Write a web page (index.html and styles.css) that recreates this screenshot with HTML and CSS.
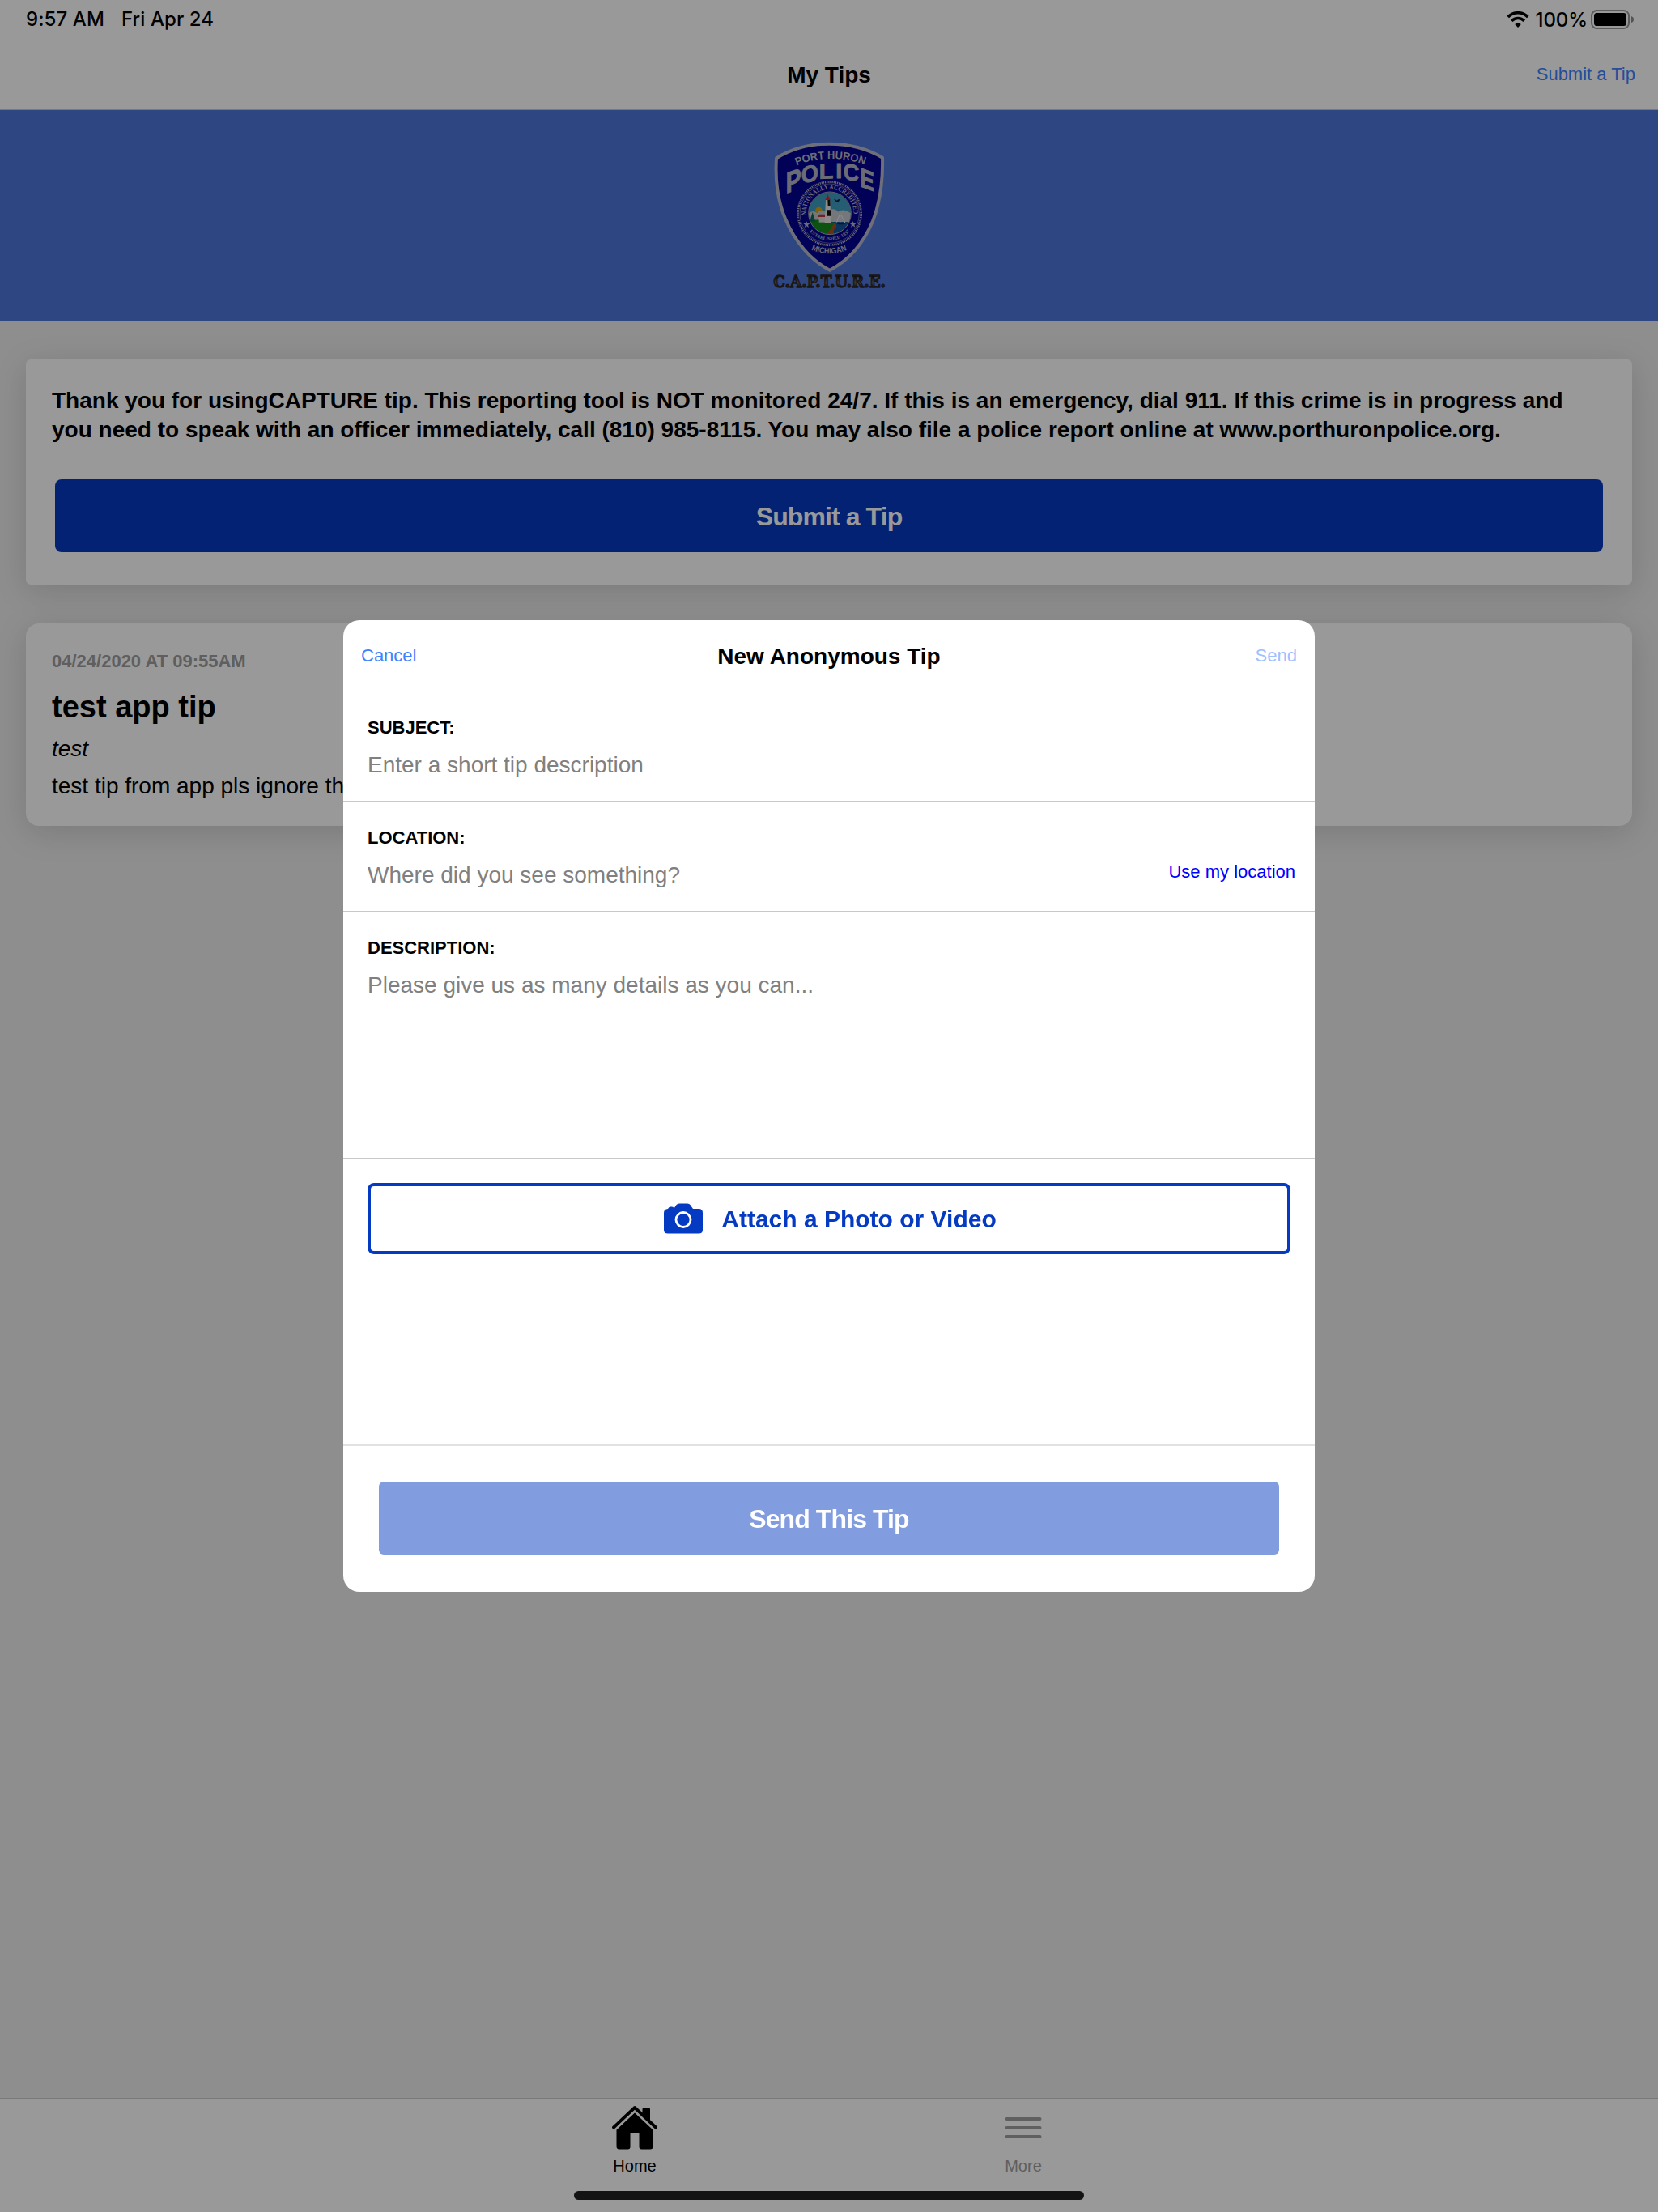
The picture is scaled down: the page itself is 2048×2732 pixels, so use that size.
FILE: index.html
```html
<!DOCTYPE html>
<html lang="en">
<head>
  <meta charset="UTF-8">
  <meta name="viewport" content="width=device-width, initial-scale=1.0">
  <title>My Tips</title>
  <link rel="stylesheet" href="styles.css">
</head>
<body>
  <div class="app">
    <div class="status-bar">
      <div class="status-left">
        <span class="time">9:57 AM</span>
        <span class="date">Fri Apr 24</span>
      </div>
      <div class="status-right">
        <svg class="wifi" width="28" height="20" viewBox="0 0 28 20">
          <path d="M1.7 7 A17 17 0 0 1 26.3 7" fill="none" stroke="#000" stroke-width="3.6"/>
          <path d="M6.2 11.8 A10.8 10.8 0 0 1 21.8 11.8" fill="none" stroke="#000" stroke-width="3.6"/>
          <path d="M14 20 L10.2 16 A5.4 5.4 0 0 1 17.8 16 Z" fill="#000"/>
        </svg>
        <span class="percent">100%</span>
        <svg class="battery" width="54" height="24" viewBox="0 0 54 24">
          <rect x="1" y="1" width="46" height="22" rx="6.5" fill="none" stroke="#000" stroke-opacity="0.4" stroke-width="2"/>
          <rect x="4" y="4" width="40" height="16" rx="3.5" fill="#000"/>
          <path d="M50 8 Q53 9 53 12 Q53 15 50 16 Z" fill="#000" fill-opacity="0.45"/>
        </svg>
      </div>
    </div>

    <div class="nav-bar">
      <span></span>
      <h1 class="nav-title">My Tips</h1>
      <a class="nav-link">Submit a Tip</a>
    </div>

    <div class="banner">
      <svg class="badge" width="210" height="230" viewBox="-3 3 630 690">
        <defs>
          <path id="arcPort" d="M192 163 Q316 113 448 162"/>
          <path id="ringTop" d="M228 352 A88 88 0 1 1 402 352"/>
          <path id="ringBottom" d="M214 341 A100 100 0 0 0 414 341"/>
          <path id="arcMichigan" d="M246 476 Q314 504 384 474"/>
          <clipPath id="scene"><circle cx="315" cy="340" r="78"/></clipPath>
          <linearGradient id="metal" x1="0" y1="0" x2="0" y2="1">
            <stop offset="0.2" stop-color="#111"/>
            <stop offset="0.55" stop-color="#6b5f5f"/>
            <stop offset="0.8" stop-color="#111"/>
          </linearGradient>
        </defs>
        <!-- shield -->
        <path d="M313 83 C235 83 175 100 117 136 C113 200 118 285 150 360 C185 445 245 515 315 551 C385 515 440 450 474 370 C505 290 512 210 510 134 C450 98 390 83 313 83 Z" fill="#020293" stroke="#b9b9cb" stroke-width="12" stroke-linejoin="round"/>
        <text class="port"><textPath href="#arcPort" textLength="258" lengthAdjust="spacingAndGlyphs">PORT HURON</textPath></text>
        <!-- every POLICE letter is taller towards the edges -->
        <g class="police">
          <text transform="translate(152 267) skewY(-20) scale(0.92 1.18)">P</text>
          <text transform="translate(209 228) skewY(-8) scale(0.88 0.94)">O</text>
          <text transform="translate(275 212) skewY(-2) scale(0.94 0.86)">L</text>
          <text transform="translate(337 211) scale(0.94 0.86)">I</text>
          <text transform="translate(365 214) skewY(8) scale(0.88 0.92)">C</text>
          <text transform="translate(427 240) skewY(20) scale(0.86 1.08)">E</text>
        </g>
        <!-- seal -->
        <circle cx="314" cy="341" r="117" fill="none" stroke="#a6a6bd" stroke-width="8" stroke-dasharray="4 2.5"/>
        <circle cx="314" cy="341" r="110" fill="none" stroke="#9494b5" stroke-width="2"/>
        <text class="ring"><textPath href="#ringTop" startOffset="4" textLength="290" lengthAdjust="spacingAndGlyphs">NATIONALLY ACCREDITED</textPath></text>
        <text class="ring ring-small"><textPath href="#ringBottom" startOffset="73" textLength="168" lengthAdjust="spacingAndGlyphs">ESTABLISHED 1857</textPath></text>
        <path class="star" d="M229 370 l3 8 h9 l-7 6 3 9 -8 -5 -8 5 3 -9 -7 -6 h9 Z"/>
        <path class="star" d="M401 369 l3 8 h9 l-7 6 3 9 -8 -5 -8 5 3 -9 -7 -6 h9 Z"/>
        <g clip-path="url(#scene)">
          <rect x="230" y="255" width="170" height="170" fill="#3f9dc0"/>
          <circle cx="274" cy="330" r="13" fill="#d2a51c"/>
          <path d="M230 350 Q248 322 268 340 Q285 322 300 335 Q330 315 345 335 Q365 318 400 345 V380 H230 Z" fill="#c3c7cc"/>
          <path d="M320 372 H400 V425 H310 Z" fill="#1557a0"/>
          <path d="M230 368 Q280 358 335 376 Q330 400 300 425 H230 Z" fill="#158a1d"/>
          <path d="M300 425 Q318 400 332 374 Q348 388 330 402 Q328 412 332 425 Z" fill="#a4561e"/>
          <path d="M240 372 L251 336 L262 372 Z" fill="#0b6b52"/>
          <rect x="275" y="352" width="22" height="22" fill="#ddd"/>
          <path d="M270 354 L276 344 H296 L298 354 Z" fill="#c4343e"/>
          <path d="M300 290 H316 L320 376 H296 Z" fill="#e8e8e8"/>
          <path d="M307 290 H316 L317 312 H308 Z M306 328 H318 L320 350 H306 Z" fill="#111"/>
          <path d="M298 291 L307 270 L318 291 Z" fill="#c9303c"/>
          <path d="M353 340 V378 M352 344 L340 374 M356 345 L372 376" stroke="#eee" stroke-width="3"/>
          <path d="M340 376 H374 L368 382 H346 Z" fill="#222"/>
          <path d="M330 287 q7 0 11 6 q5 -7 14 -4 q-6 3 -9 12 q-8 -2 -16 -14 Z" fill="#12213a"/>
        </g>
        <circle cx="315" cy="340" r="79" fill="none" stroke="#a3a3b4" stroke-width="3"/>
        <text class="michigan"><textPath href="#arcMichigan" textLength="136" lengthAdjust="spacingAndGlyphs">MICHIGAN</textPath></text>
        <text class="capture" x="106" y="615" textLength="416" lengthAdjust="spacingAndGlyphs">C.A.P.T.U.R.E.</text>
      </svg>
    </div>

    <div class="content">
      <div class="card intro-card">
        <p class="intro-text">Thank you for usingCAPTURE tip. This reporting tool is NOT monitored 24/7. If this is an emergency, dial 911. If this crime is in progress and you need to speak with an officer immediately, call (810) 985-8115. You may also file a police report online at www.porthuronpolice.org.</p>
        <div class="button submit-button">Submit a Tip</div>
      </div>

      <div class="card tip-card">
        <div class="tip-date">04/24/2020 AT 09:55AM</div>
        <h2 class="tip-title">test app tip</h2>
        <div class="tip-location">test</div>
        <div class="tip-body">test tip from app pls ignore th</div>
      </div>
    </div>

    <div class="tab-bar">
      <div class="tabs">
        <div class="tab active">
          <svg width="56" height="54" viewBox="0 0 56 54">
            <path d="M2 26.5 L28 2 L54 26.5" fill="none" stroke="#000" stroke-width="3.8" stroke-linecap="round" stroke-linejoin="round"/>
            <path d="M37.5 9 V4 Q37.5 2 39.5 2 H45 Q47 2 47 4 V18 Z" fill="#000"/>
            <path d="M28 8.5 L50.5 29.5 V50 Q50.5 53.5 47 53.5 H36.5 Q33.5 53.5 33.5 50.5 V34 H22.5 V50.5 Q22.5 53.5 19.5 53.5 H9 Q5.5 53.5 5.5 50 V29.5 Z" fill="#000"/>
          </svg>
          <span>Home</span>
        </div>
        <div class="tab">
          <svg width="56" height="54" viewBox="0 0 56 54">
            <path d="M7.5 16 H48.5 M7.5 27 H48.5 M7.5 38 H48.5" stroke="#9e9e9e" stroke-width="4" stroke-linecap="round"/>
          </svg>
          <span>More</span>
        </div>
      </div>
      <div class="home-indicator"></div>
    </div>
  </div>

  <div class="overlay">
    <div class="modal">
      <div class="modal-header">
        <a class="cancel">Cancel</a>
        <h2 class="modal-title">New Anonymous Tip</h2>
        <a class="send disabled">Send</a>
      </div>

      <div class="field">
        <label class="field-label">SUBJECT:</label>
        <div class="placeholder">Enter a short tip description</div>
      </div>

      <div class="field">
        <label class="field-label">LOCATION:</label>
        <div class="field-row">
          <div class="placeholder">Where did you see something?</div>
          <a class="use-location">Use my location</a>
        </div>
      </div>

      <div class="field field-description">
        <label class="field-label">DESCRIPTION:</label>
        <div class="placeholder">Please give us as many details as you can...</div>
      </div>

      <div class="attachments">
        <div class="attach-button">
          <svg width="48" height="38" viewBox="0 0 48 38">
            <path d="M5 7 Q6 4.5 8 4.5 H10 Q12 4.5 12.5 6.5 L15.5 2 Q17 0.5 19 0.5 H29 Q31.5 0.5 32.5 2 L36 7 H43 Q48 7 48 12 V33 Q48 37.5 43 37.5 H5 Q0 37.5 0 33 V12 Q0 7.5 5 7 Z" fill="#053ac2"/>
            <circle cx="24" cy="20.5" r="9" fill="none" stroke="#fff" stroke-width="2.8"/>
          </svg>
          <span>Attach a Photo or Video</span>
        </div>
      </div>

      <div class="modal-footer">
        <div class="button send-button">Send This Tip</div>
      </div>
    </div>
  </div>
</body>
</html>
```
FILE: styles.css
```css
* {
  box-sizing: border-box;
}
body {
  margin: 0;
  font-family: "Liberation Sans", Arial, sans-serif;
  color: #000;
  background-color: #ededed;
}
h1, h2, p {
  margin: 0;
}

/* Page */
.app {
  display: flex;
  flex-direction: column;
  height: 2732px;
}
.status-bar {
  display: flex;
  justify-content: space-between;
  height: 48px;
  padding: 0 29px 0 32px;
  background-color: #fff;
  font-family: Inter, sans-serif;
  font-size: 24px;
  font-weight: 500;
  line-height: 47px;
}
.status-left {
  display: flex;
  gap: 21px;
}
.time {
  letter-spacing: 0.1px;
}
.date {
  letter-spacing: 0.1px;
}
.status-right {
  display: flex;
  align-items: center;
}
.percent {
  margin: 0 4px 0 8px;
  letter-spacing: -0.1px;
}
.nav-bar {
  display: grid;
  grid-template-columns: 1fr auto 1fr;
  align-items: center;
  height: 88px;
  padding: 0 28px;
  background-color: #fff;
  border-bottom: 1px solid #cbcbcb;
}
.nav-title {
  padding-top: 3px;
  font-size: 28px;
}
.nav-link {
  justify-self: end;
  font-size: 22px;
  color: #3e82ff;
}
.banner {
  display: flex;
  justify-content: center;
  align-items: center;
  height: 260px;
  background-color: #4d75d9;
}
.badge text {
  fill: #b4b4c4;
  font-weight: bold;
}
.badge .port {
  font-size: 40px;
}
.badge .police {
  font-size: 92px;
}
.badge .police text {
  stroke: #b4b4c4;
  stroke-width: 3px;
}
.badge .ring {
  font-family: "Liberation Serif", serif;
  font-size: 25px;
}
.badge .ring-small {
  font-size: 18px;
}
.badge .star {
  fill: #b4b4c4;
}
.badge .michigan {
  font-size: 30px;
}
.badge .capture {
  font-family: "DejaVu Serif", serif;
  font-size: 62px;
  fill: url(#metal);
  stroke: #2a2628;
  stroke-width: 4px;
}

.content {
  flex: 1;
  display: flex;
  flex-direction: column;
  gap: 48px;
  padding: 48px 32px;
}
.card {
  padding: 32px;
  background-color: #fff;
  box-shadow: 0 8px 40px rgba(0, 0, 0, 0.14);
}
.intro-card {
  height: 278px;
  padding-top: 33px;
  border-radius: 6px;
}
.intro-text {
  font-size: 28px;
  font-weight: bold;
  line-height: 36px;
}
.button {
  display: flex;
  justify-content: center;
  align-items: center;
  height: 90px;
  padding-top: 2px;
  color: #fff;
  font-size: 32px;
  font-weight: bold;
  letter-spacing: -0.9px;
}
.submit-button {
  margin: 43px 4px 0;
  border-radius: 8px;
  background-color: #053ac2;
}
.tip-card {
  height: 250px;
  padding-top: 34px;
  border-radius: 16px;
}
.tip-date {
  font-size: 22px;
  font-weight: bold;
  line-height: 26px;
  color: #9e9e9e;
}
.tip-title {
  margin-top: 21px;
  font-size: 38px;
  line-height: 44px;
}
.tip-location {
  margin-top: 13px;
  font-size: 28px;
  font-style: italic;
  line-height: 34px;
}
.tip-body {
  margin-top: 12px;
  font-size: 28px;
  line-height: 34px;
}

.tab-bar {
  height: 141px;
  border-top: 1px solid #cbcbcb;
  background-color: #fff;
}
.tabs {
  display: flex;
  justify-content: center;
  height: 114px;
}
.tab {
  display: flex;
  flex-direction: column;
  align-items: center;
  gap: 8px;
  width: 480px;
  padding-top: 9px;
  font-size: 20px;
  line-height: 24px;
  color: #9e9e9e;
}
.tab.active {
  color: #000;
}
.home-indicator {
  width: 630px;
  height: 11px;
  margin: 0 auto;
  border-radius: 6px;
  background-color: #212121;
}

/* New tip modal */
.overlay {
  position: fixed;
  inset: 0;
  display: flex;
  justify-content: center;
  align-items: center;
  background-color: rgba(0, 0, 0, 0.4);
}
.modal {
  display: flex;
  flex-direction: column;
  width: 1200px;
  height: 1200px;
  border-radius: 20px;
  background-color: #fff;
}
.modal-header {
  display: grid;
  grid-template-columns: 1fr auto 1fr;
  align-items: center;
  height: 88px;
  padding: 0 22px;
  border-bottom: 1px solid #c8c8cb;
  font-size: 22px;
}
.modal-title {
  padding-top: 2px;
  font-size: 28px;
}
.cancel, .send {
  color: #3e82ff;
}
.send {
  justify-self: end;
}
.send.disabled {
  opacity: 0.5;
}
.field {
  display: flex;
  flex-direction: column;
  gap: 16px;
  height: 136px;
  padding: 32px 24px 0 30px;
  border-bottom: 1px solid #c8c8cb;
}
.field-description {
  height: 305px;
}
.field-label {
  font-size: 22px;
  font-weight: bold;
  line-height: 26px;
}
.placeholder {
  font-size: 28px;
  line-height: 34px;
  color: #808080;
}
.field-row {
  display: flex;
  justify-content: space-between;
}
.use-location {
  font-size: 22px;
  line-height: 26px;
  color: #0000ff;
}
.attachments {
  flex: 1;
  padding: 30px;
}
.attach-button {
  display: flex;
  justify-content: center;
  align-items: center;
  gap: 23px;
  height: 88px;
  padding-left: 3px;
  border: 4px solid #053ac2;
  border-radius: 8px;
  font-size: 30px;
  font-weight: bold;
  color: #053ac2;
}
.attach-button span {
  padding-top: 2px;
}
.modal-footer {
  height: 182px;
  padding: 44px;
  border-top: 2px solid #e2e2e2;
}
.send-button {
  border-radius: 6px;
  background-color: #829ce0;
}
```
